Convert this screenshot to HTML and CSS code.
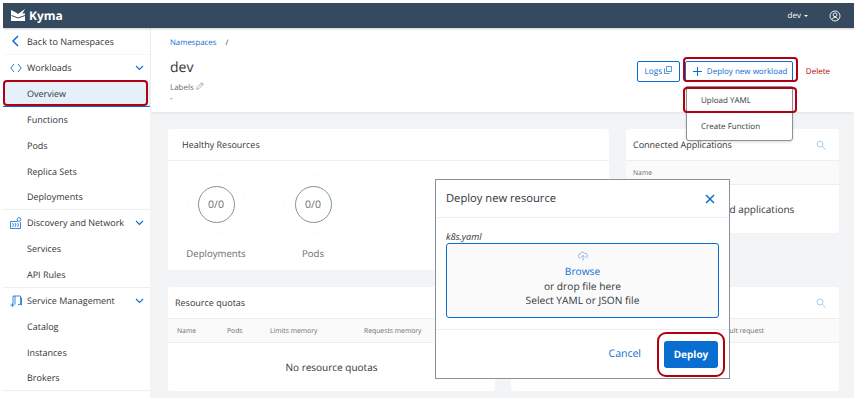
FILE: index.html
```html
<!DOCTYPE html>
<html lang="en">
<head>
    <meta charset="UTF-8">
    <title>Kyma - dev</title>
    <link rel="stylesheet" href="styles.css">
</head>
<body>
<div id="app">
    <header class="shellbar">
        <div class="brand">
            <svg class="brand-logo" width="16" height="13" viewBox="0 0 16 13"><path d="M1 1l5 2.500L8 5l2-1.500L15 0l-2.500 4.500H15V12H1z" fill="#fff"/><path d="M1.500 6.500L8 9l7-2.500" stroke="#354a5f" stroke-width="1" fill="none"/></svg>
            <span>Kyma</span>
        </div>
        <div class="shell-actions">
            <span class="ns-menu">dev <i class="caret"></i></span>
            <svg width="12" height="12" viewBox="0 0 12 12" fill="none" stroke="#fff" stroke-width=".9"><circle cx="6" cy="6" r="5"/><circle cx="6" cy="4.800" r="1.900"/><path d="M2.800 9.800c.6-1.700 1.700-2.400 3.200-2.400s2.600.7 3.200 2.400"/></svg>
        </div>
    </header>
    <div class="body-row">
        <nav class="sidebar">
            <a class="nav-row nav-back">
                <svg class="nav-icon" width="12" height="12" viewBox="0 0 12 12" fill="none" stroke="#0a6ed1" stroke-width="1.500"><path d="M8 1L3 6l5 5"/></svg>
                <span>Back to Namespaces</span>
            </a>
            <a class="nav-row">
                <svg class="nav-icon" width="12" height="10" viewBox="0 0 12 10" fill="none" stroke="#0a6ed1" stroke-width=".9"><path d="M4 1L.8 5 4 9M8 1l3.200 4L8 9"/></svg>
                <span>Workloads</span>
                <svg class="chev" width="9" height="6" viewBox="0 0 9 6" fill="none" stroke="#0a6ed1" stroke-width="1.100"><path d="M1 1l3.500 3.500L8 1"/></svg>
            </a>
            <a class="nav-row nav-sub nav-active"><span>Overview</span></a>
            <a class="nav-row nav-sub"><span>Functions</span></a>
            <a class="nav-row nav-sub"><span>Pods</span></a>
            <a class="nav-row nav-sub"><span>Replica Sets</span></a>
            <a class="nav-row nav-sub nav-last"><span>Deployments</span></a>
            <a class="nav-row">
                <svg class="nav-icon" width="12" height="12" viewBox="0 0 12 12" fill="none" stroke="#0a6ed1" stroke-width=".8"><path d="M.5 4.500h7M.5 4.500v7h10V5M2.500 6l1 2-1 2M5 6l1 2-1 2M7.500 6l1 2-1 2"/><circle cx="9" cy="2.500" r="1.800"/></svg>
                <span>Discovery and Network</span>
                <svg class="chev" width="9" height="6" viewBox="0 0 9 6" fill="none" stroke="#0a6ed1" stroke-width="1.100"><path d="M1 1l3.500 3.500L8 1"/></svg>
            </a>
            <a class="nav-row nav-sub"><span>Services</span></a>
            <a class="nav-row nav-sub nav-last"><span>API Rules</span></a>
            <a class="nav-row">
                <svg class="nav-icon" width="12" height="13" viewBox="0 0 12 13" fill="none" stroke="#0a6ed1" stroke-width=".8"><path d="M3 9V1.500h7.500V10H8M5 1.500V10M11.500 3v8M.5 10.500h4M2.500 8.500v4"/></svg>
                <span>Service Management</span>
                <svg class="chev" width="9" height="6" viewBox="0 0 9 6" fill="none" stroke="#0a6ed1" stroke-width="1.100"><path d="M1 1l3.500 3.500L8 1"/></svg>
            </a>
            <a class="nav-row nav-sub"><span>Catalog</span></a>
            <a class="nav-row nav-sub"><span>Instances</span></a>
            <a class="nav-row nav-sub nav-last"><span>Brokers</span></a>
            <a class="nav-row">
                <svg class="nav-icon" width="12" height="12" viewBox="0 0 12 12" fill="none" stroke="#0a6ed1" stroke-width=".9"><path d="M1 1h5M1 4h10v7H1z"/></svg>
            </a>
        </nav>
        <main class="content">
            <section class="page-head">
                <div class="crumbs"><a>Namespaces</a><span>/</span></div>
                <div class="title-row">
                    <div>
                        <h1>dev</h1>
                        <div class="labels">Labels
                            <svg width="8" height="8" viewBox="0 0 8 8" fill="none" stroke="#89919a" stroke-width=".7"><path d="M.6 7.400l.5-2L5.800.7l1.500 1.500-4.700 4.700zM4.900 1.600l1.500 1.500"/></svg>
                        </div>
                        <div class="labels-value">-</div>
                    </div>
                    <div class="head-actions">
                        <button class="btn-logs">Logs
                            <svg width="8" height="8" viewBox="0 0 8 8" fill="none" stroke="#0a6ed1" stroke-width=".7"><path d="M2.500 .5h5v5h-5zM.5 2.500v5h5"/></svg>
                        </button>
                        <button class="btn-deploy">
                            <svg width="9" height="9" viewBox="0 0 9 9" fill="none" stroke="#0a6ed1" stroke-width="1"><path d="M4.500 0v9M0 4.500h9"/></svg>
                            <span>Deploy new workload</span>
                        </button>
                        <button class="btn-delete">Delete</button>
                    </div>
                </div>
            </section>
            <div class="cards">
                <section class="card card-healthy">
                    <h2 class="card-title">Healthy Resources</h2>
                    <div class="gauges">
                        <div class="gauge"><div class="ring">0/0</div><p>Deployments</p></div>
                        <div class="gauge"><div class="ring">0/0</div><p>Pods</p></div>
                    </div>
                </section>
                <section class="card card-apps">
                    <div class="card-title card-title-search">
                        <h2>Connected Applications</h2>
                        <svg class="search" width="10" height="10" viewBox="0 0 10 10" fill="none" stroke="#a9cdee" stroke-width="1"><circle cx="4" cy="4" r="3"/><path d="M6.300 6.300L9.500 9.500"/></svg>
                    </div>
                    <div class="table-head"><span>Name</span></div>
                    <div class="empty">No connected applications</div>
                </section>
                <section class="card card-quotas">
                    <h2 class="card-title">Resource quotas</h2>
                    <div class="table-head table-quotas">
                        <span>Name</span><span>Pods</span><span>Limits memory</span><span>Requests memory</span>
                    </div>
                    <div class="empty">No resource quotas</div>
                </section>
                <section class="card card-limits">
                    <div class="card-title card-title-search">
                        <svg class="search" width="10" height="10" viewBox="0 0 10 10" fill="none" stroke="#a9cdee" stroke-width="1"><circle cx="4" cy="4" r="3"/><path d="M6.300 6.300L9.500 9.500"/></svg>
                    </div>
                    <div class="table-head table-limits"><span>Default request</span></div>
                </section>
            </div>
        </main>
    </div>

    <!-- deploy menu, over the page -->
    <div class="deploy-menu">
        <div class="menu-item">Upload YAML</div>
        <div class="menu-item">Create Function</div>
    </div>

    <!-- dialog -->
    <div class="dialog">
        <div class="dialog-head">
            <span>Deploy new resource</span>
            <svg width="10" height="10" viewBox="0 0 10 10" fill="none" stroke="#0a6ed1" stroke-width="1.500"><path d="M1 1l8 8M9 1L1 9"/></svg>
        </div>
        <div class="dialog-body">
            <div class="file-name">k8s.yaml</div>
            <div class="dropzone">
                <svg width="10" height="10" viewBox="0 0 10 10" fill="none" stroke="#5a9fe0" stroke-width=".7"><path d="M2.500 6.800H2A1.700 1.700 0 0 1 1.800 3.400 2.500 2.500 0 0 1 6.500 2.400 2.200 2.200 0 0 1 7.800 6.800h-.4M5 9.500V4.500M3.300 6L5 4.300 6.700 6"/></svg>
                <a>Browse</a>
                <span>or drop file here</span>
                <span>Select YAML or JSON file</span>
            </div>
        </div>
        <div class="dialog-foot">
            <button class="btn-cancel">Cancel</button>
            <button class="btn-primary">Deploy</button>
        </div>
    </div>

    <!-- red annotation boxes -->
    <div class="mark mark-overview"></div>
    <div class="mark mark-deploy"></div>
    <div class="mark mark-upload"></div>
    <div class="mark mark-confirm"></div>
</div>
</body>
</html>
```

FILE: styles.css
```css
* {
    box-sizing: border-box;
}

html, body {
    margin: 0;
    height: 100%;
    background: #fff;
    overflow: hidden;
}

body {
    padding: 3px 4px 6px 3px;
    font-family: "Open Sans", Arial, sans-serif;
    font-size: 9px;
    color: #32363a;
    text-rendering: geometricPrecision;
}

button {
    text-rendering: geometricPrecision;
}

#app {
    position: relative;
    height: 395px;
    display: flex;
    flex-direction: column;
    overflow: hidden;
}

button {
    font-family: inherit;
    background: none;
    border: none;
    padding: 0;
}

.shellbar {
    flex: none;
    height: 25px;
    background: #354a5f;
    color: #fff;
    display: flex;
    align-items: center;
    justify-content: space-between;
    padding: 0 13px 0 7px;
    box-shadow: 0 1px 2px rgba(0, 0, 0, 0.2);
    z-index: 2;
}

.brand {
    display: flex;
    align-items: center;
    gap: 3px;
    font-size: 12px;
    font-weight: 700;
}

.shell-actions {
    display: flex;
    align-items: center;
    gap: 21px;
    font-size: 8px;
}

.caret {
    display: inline-block;
    margin-left: 1px;
    vertical-align: 1px;
    border-left: 2px solid transparent;
    border-right: 2px solid transparent;
    border-top: 2px solid #fff;
}

.body-row {
    flex: 1;
    display: flex;
    min-height: 0;
}

.sidebar {
    flex: none;
    width: 147px;
    background: #fff;
    padding-top: 1px;
}

.nav-row {
    height: 25.860px;
    display: flex;
    align-items: center;
    position: relative;
    padding-left: 24px;
    color: #32363a;
}

.nav-back {
    padding-top: 1px;
    border-bottom: 1px solid #f5f6f7;
}

.nav-icon {
    position: absolute;
    left: 7px;
    top: 50%;
    transform: translateY(-50%);
}

.chev {
    position: absolute;
    right: 6px;
    top: 10px;
}

.nav-active {
    background: #e5f0fa;
    border-bottom: 1px solid #0a6ed1;
}

.nav-last {
    border-bottom: 1px solid #eeeeef;
}

.content {
    flex: 1;
    min-width: 0;
    background: #f3f4f5;
    display: flex;
    flex-direction: column;
}

.page-head {
    flex: none;
    height: 84px;
    margin-left: 1px;
    background: #fff;
    padding: 10px 24px 0 19px;
    box-shadow: 0 1px 3px rgba(0, 0, 0, 0.08);
}

.crumbs {
    display: flex;
    gap: 9px;
    font-size: 7.800px;
    height: 11px;
}

.crumbs a {
    color: #0a6ed1;
}

.title-row {
    display: flex;
    justify-content: space-between;
    margin-top: 10px;
}

h1 {
    margin: 0;
    font-size: 14px;
    font-weight: 400;
    line-height: 18px;
}

.labels {
    margin-top: 5px;
    color: #6a6d70;
    font-size: 8px;
    line-height: 10px;
}

.labels-value {
    font-size: 8px;
    line-height: 11px;
}

.head-actions {
    display: flex;
    align-items: center;
    height: 22px;
    margin-top: 1px;
}

.btn-logs {
    height: 21px;
    width: 43px;
    border: 1px solid #0a6ed1;
    border-radius: 2px;
    color: #0a6ed1;
    font-size: 8.200px;
}

.btn-deploy {
    height: 21px;
    width: 108px;
    margin-left: 5px;
    border: 1px solid #0a6ed1;
    border-radius: 2px;
    color: #0a6ed1;
    font-size: 8px;
    white-space: nowrap;
    display: flex;
    align-items: center;
    gap: 5px;
    padding-left: 7px;
}

.btn-delete {
    margin-left: 13px;
    color: #bb0000;
    font-size: 8px;
}

.cards {
    display: flex;
    flex-wrap: wrap;
    align-items: flex-start;
    gap: 17px;
    padding: 17px 15px 0 18px;
}

.card {
    background: #fff;
    border-radius: 3px;
}

.card h2, h2.card-title {
    margin: 0;
    font-size: 9px;
    font-weight: 400;
}

.card-title {
    height: 32px;
    display: flex;
    align-items: center;
    justify-content: space-between;
    padding: 0 14px;
    border-bottom: 1px solid #eeeeef;
}

.card-healthy {
    width: 441px;
    height: 141px;
}

.card-apps {
    width: 213px;
    height: 104px;
}

.card-apps .card-title {
    padding: 0 7px;
}

.card-title-search .search {
    margin-right: 6px;
}

.card-quotas {
    width: 327px;
    height: 104px;
}

.card-limits {
    width: 328px;
    height: 104px;
    margin-left: -1px;
}

.card-limits .card-title {
    justify-content: flex-end;
    padding: 0 7px;
}

.card-quotas .card-title {
    padding: 0 7px;
}

.gauges {
    display: flex;
    padding: 25px 0 0 19px;
    gap: 39px;
}

.gauge {
    width: 58px;
    display: flex;
    flex-direction: column;
    align-items: center;
}

.ring {
    width: 37px;
    height: 37px;
    border-radius: 50%;
    border: 1px solid #8c8f92;
    outline: 1px dotted #f7f7f7;
    outline-offset: 10px;
    display: flex;
    align-items: center;
    justify-content: center;
    font-size: 10.500px;
    color: #6a6d70;
}

.gauge p {
    margin: 25px 0 0;
    color: #6a6d70;
    font-size: 9.600px;
    line-height: 12px;
    white-space: nowrap;
}

.table-head {
    height: 24px;
    background: #fafafa;
    border-bottom: 1px solid #eeeeef;
    display: flex;
    align-items: center;
    padding: 0 7px;
    font-size: 6.800px;
    color: #6a6d70;
}

.table-quotas {
    padding: 0 9px;
}

.table-quotas span:nth-child(1) { width: 50px; }
.table-quotas span:nth-child(2) { width: 43px; }
.table-quotas span:nth-child(3) { width: 94px; }

.table-limits {
    justify-content: flex-end;
    padding-right: 75px;
}

.empty {
    height: 48px;
    display: flex;
    align-items: center;
    justify-content: center;
    font-size: 10px;
}

.deploy-menu {
    position: absolute;
    left: 683px;
    top: 83px;
    width: 107px;
    height: 55px;
    background: #fff;
    border: 1px solid #89919a;
    border-radius: 0 0 3px 3px;
    box-shadow: 0 1px 3px rgba(0, 0, 0, 0.15);
    z-index: 3;
}

.menu-item {
    height: 26px;
    display: flex;
    align-items: center;
    padding-left: 14px;
    font-size: 8px;
}

.dialog {
    position: absolute;
    left: 432px;
    top: 176px;
    width: 295px;
    height: 200px;
    background: #fff;
    border: 1px solid #89919a;
    z-index: 4;
    display: flex;
    flex-direction: column;
}

.dialog-head {
    flex: none;
    height: 38px;
    display: flex;
    align-items: center;
    justify-content: space-between;
    padding: 0 14px 0 10px;
    border-bottom: 1px solid #eeeeef;
    font-size: 11.200px;
}

.dialog-body {
    flex: none;
    height: 112px;
    padding: 13px 10px 0;
    border-bottom: 1px solid #eeeeef;
}

.file-name {
    font-size: 9.200px;
    font-style: italic;
    line-height: 12px;
}

.dropzone {
    height: 75px;
    background: #fafafa;
    border: 1px solid #0a6ed1;
    border-radius: 3px;
    display: flex;
    flex-direction: column;
    align-items: center;
    padding-top: 7px;
    font-size: 10.200px;
    line-height: 14.500px;
}

.dropzone svg {
    margin-bottom: 3px;
}

.dropzone a {
    color: #0a6ed1;
}

.dialog-foot {
    flex: 1;
    display: flex;
    align-items: center;
    justify-content: flex-end;
    gap: 23px;
    padding-right: 11px;
}

.btn-cancel {
    color: #0a6ed1;
    font-size: 10.500px;
}

.btn-primary {
    width: 54px;
    height: 27px;
    border-radius: 3px;
    background: #0a6ed1;
    color: #fff;
    font-size: 10px;
    font-weight: 700;
}

.mark {
    position: absolute;
    border: 2px solid #b00012;
    border-radius: 4px;
    z-index: 5;
}

.mark-overview {
    left: 0;
    top: 77px;
    width: 145px;
    height: 26px;
}

.mark-deploy {
    left: 680px;
    top: 54px;
    width: 115px;
    height: 25px;
}

.mark-upload {
    left: 680px;
    top: 84px;
    width: 114px;
    height: 26px;
}

.mark-confirm {
    left: 654px;
    top: 329px;
    width: 68px;
    height: 45px;
    border-radius: 9px;
}
```
